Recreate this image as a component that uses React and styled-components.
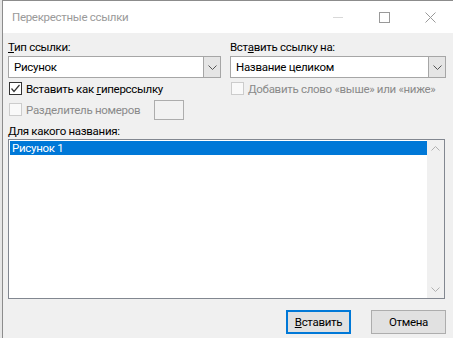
import styled, { createGlobalStyle } from "styled-components"

const GlobalStyle = createGlobalStyle`
  html, body {
    margin: 0;
    padding: 0;
    background: #e6e6e6;
    overflow: hidden;
  }
  body {
    font-family: Roboto, "Noto Sans", sans-serif;
    font-size: 11.5px;
    letter-spacing: -0.3px;
    color: #000;
  }
`

function Check({ checked, disabled }) {
  return (
    <Box $disabled={disabled}>
      {checked && (
        <svg width="11" height="11" viewBox="0 0 11 11">
          <path d="M1.5 5.5 L4 8.5 L9.5 2" fill="none" stroke="#333" strokeWidth="1.2" />
        </svg>
      )}
    </Box>
  )
}

function Chevron({ up, color = "#555" }) {
  return (
    <svg width="9" height="5" viewBox="0 0 9 5">
      <path
        d={up ? "M0.5 4.5 L4.5 0.5 L8.5 4.5" : "M0.5 0.5 L4.5 4.5 L8.5 0.5"}
        fill="none"
        stroke={color}
        strokeWidth="1"
      />
    </svg>
  )
}

function Select({ value }) {
  return (
    <SelectBox>
      <SelectValue>{value}</SelectValue>
      <SelectButton>
        <Chevron />
      </SelectButton>
    </SelectBox>
  )
}

function App() {
  return (
    <>
      <GlobalStyle />
      <Window>
        <TitleBar>
          <Title>Перекрестные ссылки</Title>
          <TitleButton>
            <svg width="10" height="10" viewBox="0 0 10 10">
              <path d="M0 5.5 H10" stroke="#d8d8d8" />
            </svg>
          </TitleButton>
          <TitleButton>
            <svg width="11" height="11" viewBox="0 0 11 11">
              <rect x="0.5" y="0.5" width="10" height="10" fill="none" stroke="#999" />
            </svg>
          </TitleButton>
          <TitleButton>
            <svg width="11" height="11" viewBox="0 0 11 11">
              <path d="M0.5 0.5 L10.5 10.5 M10.5 0.5 L0.5 10.5" stroke="#999" />
            </svg>
          </TitleButton>
        </TitleBar>

        <Body>
          <Columns>
            <Column>
              <Label>
                <u>Т</u>ип ссылки:
              </Label>
              <Select value="Рисунок" />
              <CheckRow>
                <Check checked />
                <CheckText>
                  Вставить как <u>г</u>иперссылку
                </CheckText>
              </CheckRow>
              <CheckRow $tall>
                <Check disabled />
                <CheckText $disabled>Разделитель номеров</CheckText>
                <SmallInput />
              </CheckRow>
            </Column>
            <Column>
              <Label>
                Вст<u>а</u>вить ссылку на:
              </Label>
              <Select value="Название целиком" />
              <CheckRow>
                <Check disabled />
                <CheckText $disabled>Добавить слово «выше» или «ниже»</CheckText>
              </CheckRow>
            </Column>
          </Columns>

          <ListLabel>
            <u>Д</u>ля какого названия:
          </ListLabel>
          <ListBox>
            <ListItems>
              <ListItem $selected>Рисунок 1</ListItem>
            </ListItems>
            <ScrollBar>
              <ScrollArrow>
                <Chevron up color="#b0b0b0" />
              </ScrollArrow>
              <ScrollArrow>
                <Chevron color="#b0b0b0" />
              </ScrollArrow>
            </ScrollBar>
          </ListBox>

          <Footer>
            <Button $primary $width={65}>
              <u>В</u>ставить
            </Button>
            <Button $width={75}>Отмена</Button>
          </Footer>
        </Body>
      </Window>
    </>
  )
}

const Window = styled.div`
  margin-left: 2px;
  height: 338px;
  display: flex;
  flex-direction: column;
  border-left: 1px solid #8c8c8c;
  border-top: 1px solid #8c8c8c;
  background: #f0f0f0;
`

const TitleBar = styled.div`
  display: flex;
  align-items: center;
  height: 32px;
  background: #fff;
`

const Title = styled.div`
  flex: 1;
  padding-left: 9px;
  color: #9a9a9a;
  font-size: 11.5px;
`

const TitleButton = styled.div`
  width: 46px;
  height: 32px;
  display: flex;
  align-items: center;
  justify-content: center;
`

const Body = styled.div`
  flex: 1;
  display: flex;
  flex-direction: column;
  padding: 6px 7px 0 5px;
`

const Columns = styled.div`
  display: grid;
  grid-template-columns: 213px 1fr;
  column-gap: 9px;
`

const Column = styled.div`
  display: flex;
  flex-direction: column;
`

const Label = styled.div`
  height: 16px;
  line-height: 16px;
  margin-bottom: 1px;
  white-space: nowrap;
`

const SelectBox = styled.div`
  display: flex;
  height: 22px;
  box-sizing: border-box;
  border: 1px solid #a6a6a6;
  background: #fff;
`

const SelectValue = styled.div`
  flex: 1;
  padding-left: 5px;
  line-height: 20px;
`

const SelectButton = styled.div`
  width: 16px;
  display: flex;
  align-items: center;
  justify-content: center;
  background: #e5e5e5;
  border-left: 1px solid #a6a6a6;
`

const CheckRow = styled.div`
  display: flex;
  align-items: center;
  height: ${({ $tall }) => ($tall ? "21px" : "17px")};
  margin-top: 2px;
  padding-left: 1px;
  white-space: nowrap;
`

const Box = styled.div`
  width: 13px;
  height: 13px;
  box-sizing: border-box;
  border: 1px solid ${({ $disabled }) => ($disabled ? "#cccccc" : "#333")};
  background: ${({ $disabled }) => ($disabled ? "#f9f9f9" : "#fff")};
  display: flex;
  align-items: center;
  justify-content: center;
`

const CheckText = styled.span`
  margin-left: 4px;
  color: ${({ $disabled }) => ($disabled ? "#8a8a8a" : "#000")};
`

const SmallInput = styled.div`
  width: 30px;
  height: 20px;
  box-sizing: border-box;
  margin-left: 14px;
  border: 1px solid #adadad;
  background: #f2f2f2;
`

const ListLabel = styled(Label)`
  margin-top: 3px;
  margin-bottom: 0;
`

const ListBox = styled.div`
  display: flex;
  height: 160px;
  box-sizing: border-box;
  margin-right: 1px;
  border: 1px solid #828790;
  background: #fff;
`

const ListItems = styled.div`
  flex: 1;
  padding: 1px 0 0 1px;
`

const ListItem = styled.div`
  height: 14px;
  line-height: 14px;
  padding-left: 2px;
  background: ${({ $selected }) => ($selected ? "#0078d7" : "transparent")};
  color: ${({ $selected }) => ($selected ? "#fff" : "#000")};
`

const ScrollBar = styled.div`
  width: 17px;
  display: flex;
  flex-direction: column;
  justify-content: space-between;
  background: #f0f0f0;
`

const ScrollArrow = styled.div`
  height: 17px;
  display: flex;
  align-items: center;
  justify-content: center;
`

const Footer = styled.div`
  display: flex;
  justify-content: flex-end;
  gap: 20px;
  margin-top: 11px;
`

const Button = styled.div`
  width: ${({ $width }) => $width}px;
  height: 24px;
  box-sizing: border-box;
  display: flex;
  align-items: center;
  justify-content: center;
  background: #e1e1e1;
  border: ${({ $primary }) => ($primary ? "2px solid #0078d7" : "1px solid #adadad")};
`

export default App
